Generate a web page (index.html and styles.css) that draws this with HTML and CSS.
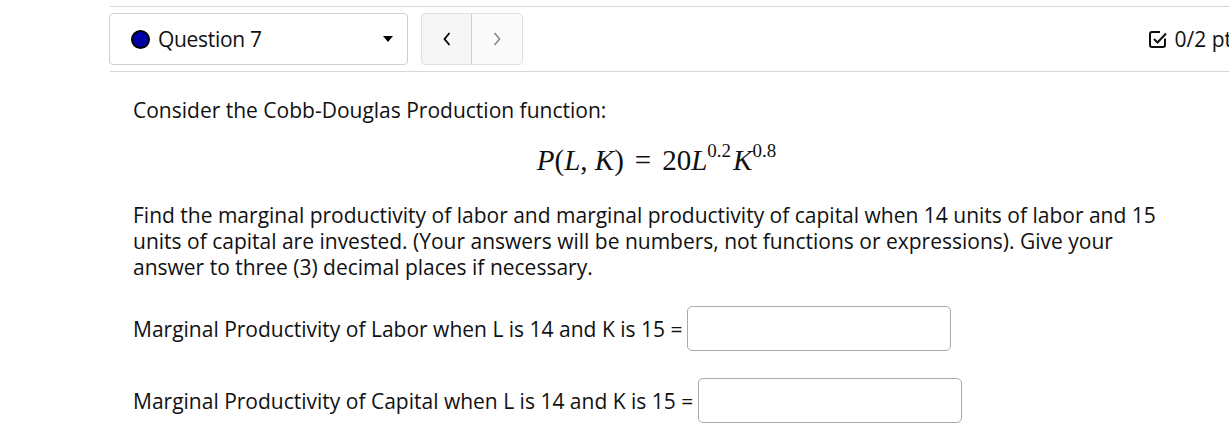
FILE: index.html
```html
<!DOCTYPE html>
<html>
<head>
<meta charset="utf-8">
<link rel="stylesheet" href="styles.css">
</head>
<body>
<div class="page">
  <div class="header">
    <div class="qselect">
      <span class="dot"></span>
      <span class="qname">Question 7</span>
      <span class="caret"></span>
    </div>
    <div class="nav">
      <button class="navbtn prev" type="button">
        <svg width="10" height="16" viewBox="0 0 10 16"><path d="M7.5 2 L2.5 8 L7.5 14" fill="none" stroke="#000" stroke-width="1.8"/></svg>
      </button>
      <button class="navbtn next" type="button">
        <svg width="10" height="16" viewBox="0 0 10 16"><path d="M2.5 2 L7.5 8 L2.5 14" fill="none" stroke="#888" stroke-width="1.6"/></svg>
      </button>
    </div>
    <div class="score">
      <svg class="check" width="20" height="20" viewBox="0 0 20 20"><path d="M17 9.5 V16 a2 2 0 0 1 -2 2 H4 a2 2 0 0 1 -2 -2 V5 a2 2 0 0 1 2 -2 H12" fill="none" stroke="#111" stroke-width="2"/><path d="M6 10 L9.5 13.5 L18 4.5" fill="none" stroke="#111" stroke-width="2"/></svg>
      <span class="pts">0/2 pts</span>
    </div>
  </div>
  <div class="content">
    <p class="intro">Consider the Cobb-Douglas Production function:</p>
    <div class="math"><i>P</i>(<i>L</i>, <i>K</i>)<span class="eq">=</span>20<i>L</i><sup>0.2</sup><i class="k">K</i><sup>0.8</sup></div>
    <p class="para">Find the marginal productivity of labor and marginal productivity of capital when 14 units of labor and 15 units of capital are invested. (Your answers will be numbers, not functions or expressions). Give your answer to three (3) decimal places if necessary.</p>
    <div class="row">
      <span class="lbl">Marginal Productivity of Labor when L is 14 and K is 15 =</span>
      <input class="ans" type="text">
    </div>
    <div class="row">
      <span class="lbl">Marginal Productivity of Capital when L is 14 and K is 15 =</span>
      <input class="ans" type="text">
    </div>
  </div>
</div>
</body>
</html>
```
FILE: styles.css
```css
html, body {
  margin: 0;
  padding: 0;
  background: #fff;
  overflow: hidden;
}
body {
  font-family: "Open Sans", "Noto Sans", sans-serif;
  color: #111;
}
.page {
  margin-left: 110px;
  width: 1132px;
  padding-top: 6px;
}
.header {
  display: flex;
  align-items: center;
  border-top: 1px solid #d6d6d6;
  border-bottom: 1px solid #d6d6d6;
  padding: 6px 0 6px 0;
}
.qselect {
  box-sizing: border-box;
  width: 299px;
  height: 52px;
  margin-left: -1px;
  border: 1px solid #cfcfcf;
  border-radius: 4px;
  display: flex;
  align-items: center;
  padding: 0 14px 0 21px;
}
.dot {
  box-sizing: border-box;
  width: 19px;
  height: 19px;
  border-radius: 50%;
  background: #0000a8;
  border: 2px solid #000;
}
.qname {
  margin-left: 8px;
  font-size: 21px;
  letter-spacing: -0.3px;
  flex: 1;
}
.caret {
  width: 0;
  height: 0;
  border-left: 5px solid transparent;
  border-right: 5px solid transparent;
  border-top: 6px solid #000;
}
.nav {
  margin-left: 13px;
  display: flex;
  height: 52px;
  box-sizing: border-box;
  border: 1px solid #e0e0e0;
  border-radius: 4px;
  background: #f6f6f6;
  overflow: hidden;
}
.navbtn {
  width: 50px;
  border: 0;
  background: transparent;
  display: flex;
  align-items: center;
  justify-content: center;
  padding: 0;
}
.navbtn.prev {
  border-right: 1px solid #cfcfcf;
}
.navbtn.next {
  background: #fafafa;
}
.score {
  margin-left: auto;
  display: flex;
  align-items: center;
}
.check {
  margin-right: 6px;
}
.pts {
  font-size: 21px;
  white-space: nowrap;
}
.content {
  padding-left: 23px;
  font-size: 21px;
}
.intro {
  margin: 25px 0 0 0;
  line-height: 26px;
}
.math {
  font-family: "Liberation Serif", "DejaVu Serif", serif;
  font-size: 29px;
  text-align: center;
  margin-top: 21px;
  line-height: 32px;
  padding-right: 62px;
}
.math sup {
  font-size: 19px;
  vertical-align: 13px;
  line-height: 0;
}
.math .eq {
  margin: 0 11px;
}
.math .k {
  margin-left: 2px;
}
.para {
  margin: 26px 0 0 0;
  line-height: 26px;
  width: 1050px;
}
.row {
  display: flex;
  align-items: center;
  margin-top: 26px;
}
.row + .row {
  margin-top: 27px;
}
.lbl {
  line-height: 26px;
}
.ans {
  box-sizing: border-box;
  width: 264px;
  height: 45px;
  margin-left: 5px;
  border: 1px solid #aaa;
  border-radius: 5px;
  background: #fff;
}
```
